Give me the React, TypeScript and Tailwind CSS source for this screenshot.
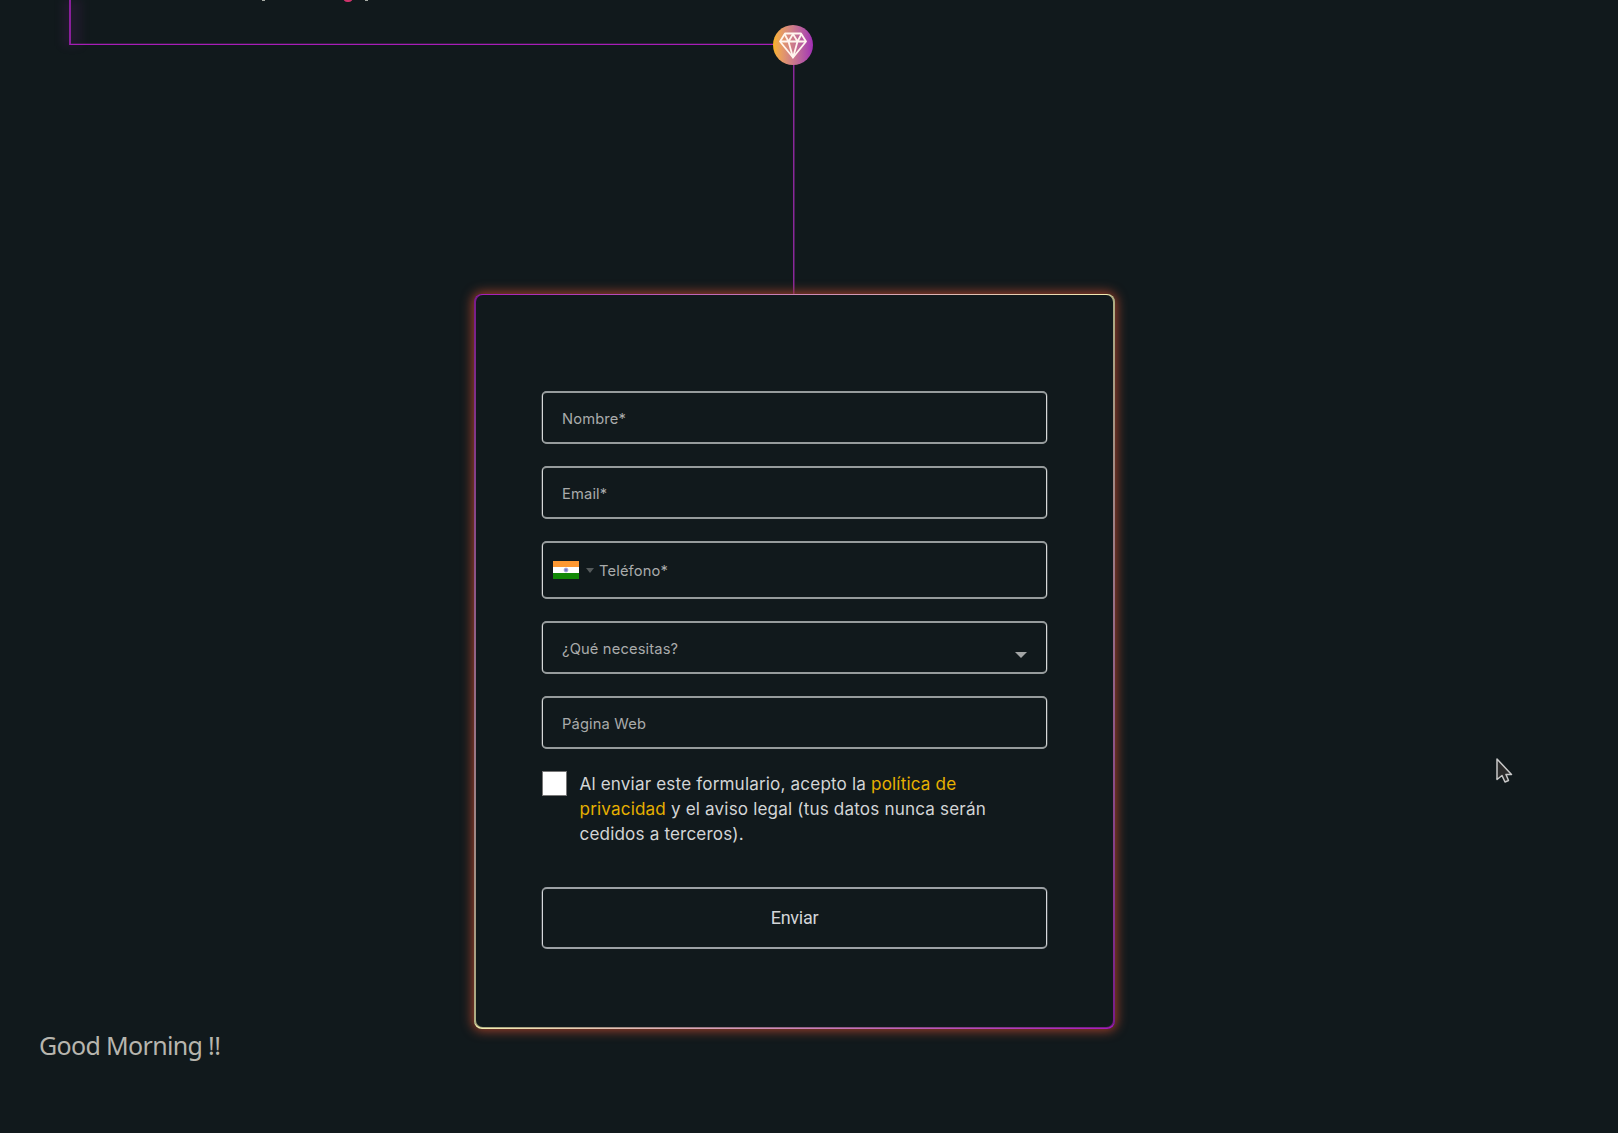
import React from "react";

const fieldBase =
  "flex w-full rounded-[5px] border-x border-y-2 border-x-[#d6d8d8] border-y-[#969b9c] bg-[#11191c] text-[14.7px] leading-[20px] tracking-[0.15px] text-[#a9abab] shadow-[0.5px_0_0_0_#6e7374,-0.5px_0_0_0_#6e7374]";

function Field({ label, className }: { label: string; className: string }) {
  return (
    <label className={`${fieldBase} h-[53px] items-center pl-[19px] ${className}`}>
      <span className="mt-[2px]">{label}</span>
    </label>
  );
}

function IndiaFlag() {
  return (
    <svg width="26" height="18" viewBox="0 0 26 18" aria-hidden="true">
      <rect width="26" height="18" fill="#fff" />
      <rect width="26" height="6" fill="#ff9933" />
      <rect y="12" width="26" height="6" fill="#128807" />
      <circle cx="13" cy="9" r="2" fill="#7b7bc6" stroke="#b0b0dd" strokeWidth="0.8" />
    </svg>
  );
}

function Diamond() {
  return (
    <svg
      width="28"
      height="27"
      viewBox="0 0 28 27"
      fill="none"
      stroke="#fff5ee"
      strokeWidth="1.8"
      strokeLinejoin="round"
      aria-hidden="true"
    >
      <path d="M6 1.5H22L27 9.5L14 25.5L1 9.5Z" />
      <path d="M1 9.5H27M5.5 2L9.5 9.5L14 2L18.5 9.5L22.5 2M9.5 9.5L14 25.5L18.5 9.5" />
    </svg>
  );
}

export default function App() {
  return (
    <div className="relative flex h-[1133px] w-[1618px] flex-col overflow-hidden bg-[#11191c] font-['Inter',sans-serif]">
      <header className="relative ml-[69px] h-[45px] w-[725px] shrink-0 border-b border-l-2 border-b-[#a81cb8] border-l-[#8a1f9b] shadow-[inset_0_-1px_0_0_#351f40]">
        <div className="absolute -left-[8px] top-0 h-[46px] w-[18px] bg-[#8a1f9b]/12 blur-[4px]" />
        <div className="absolute left-[191px] top-0 h-[1px] w-[3px] bg-[#a5aaa4]" />
        <div className="absolute left-[272px] -top-[7px] h-[9px] w-[10px] rounded-full bg-[#cf336b]" />
        <div className="absolute left-[294px] top-0 h-[1px] w-[3px] bg-[#a5aaa4]" />
        <div className="absolute -right-[19px] top-[25px] z-10 flex h-[40px] w-[40px] items-center justify-center rounded-full bg-linear-to-r from-[#fbb31a] to-[#a22bb5]">
          <Diamond />
        </div>
      </header>
      <div className="ml-[793px] h-[249px] w-px shrink-0 bg-[#8a279b] shadow-[1px_0_0_0_#4c2159]" />

      <main className="ml-[474px] h-[735px] w-[641px] shrink-0 rounded-[8px] bg-[linear-gradient(to_bottom_right,#a51bbb_0%,#f3eeb0_50%,#a51bbb_100%)] px-[2px] pt-[1px] pb-[2px] shadow-[0_0_11px_2px_#9a3f29]">
        <form className="flex h-full flex-col rounded-[7px] bg-[#11191c] px-[66px] pt-[96px] shadow-[-2px_0_0_0_#11191c4d,2px_0_0_0_#11191c4d,0_1px_0_0_#11191c4d]">
          <Field label="Nombre*" className="" />
          <Field label="Email*" className="mt-[22px]" />
          <label className={`${fieldBase} mt-[22px] h-[58px] items-center pl-[10px]`}>
            <IndiaFlag />
            <svg className="ml-[7px]" width="8" height="5" viewBox="0 0 8 5" aria-hidden="true">
              <path d="M0 0H8L4 5Z" fill="#555a5b" />
            </svg>
            <span className="ml-[5px] mt-px">Teléfono*</span>
          </label>
          <label className={`${fieldBase} mt-[22px] h-[53px] items-center justify-between pl-[19px] pr-[19px]`}>
            <span className="mt-[2px]">¿Qué necesitas?</span>
            <svg className="mt-[15px]" width="12" height="6" viewBox="0 0 12 6" aria-hidden="true">
              <path d="M0 0H12L6 6Z" fill="#a3a5a5" />
            </svg>
          </label>
          <Field label="Página Web" className="mt-[22px]" />
          <div className="mt-[22px] flex">
            <span className="h-[25px] w-[25px] shrink-0 border border-[#777] bg-white" />
            <p className="ml-[12.5px] text-[17.1px] leading-[25px] tracking-[0.16px] whitespace-nowrap text-[#d3d5d6]">
              Al enviar este formulario, acepto la <a className="text-[#e6b000]">política de</a>
              <br />
              <a className="text-[#e6b000]">privacidad</a> y el aviso legal (tus datos nunca serán
              <br />
              cedidos a terceros).
            </p>
          </div>
          <button
            type="button"
            className="mt-[41px] h-[62px] rounded-[5px] border-x border-y-2 border-x-[#d6d8dc] border-y-[#9da1a5] pb-[2px] font-['Roboto',sans-serif] text-[18px] tracking-[-0.25px] text-[#d3d5d8] shadow-[0.5px_0_0_0_#6e7374,-0.5px_0_0_0_#6e7374]"
          >
            Enviar
          </button>
        </form>
      </main>

      <p className="-mt-px ml-[39px] w-fit font-['Noto_Sans',sans-serif] text-[25px] leading-[34px] tracking-[-0.66px] text-[#b7b5ae]">
        Good Morning !!
      </p>

      <svg className="absolute left-[1495px] top-[757px]" width="19" height="28" viewBox="0 0 19 28" aria-hidden="true">
        <path
          d="M2 2V22.5L7 18.5L10 25L13.5 23.5L11 17.5H16.5Z"
          fill="#2b2b2b"
          stroke="#c8c8c8"
          strokeWidth="1.5"
          strokeLinejoin="round"
        />
      </svg>
    </div>
  );
}
